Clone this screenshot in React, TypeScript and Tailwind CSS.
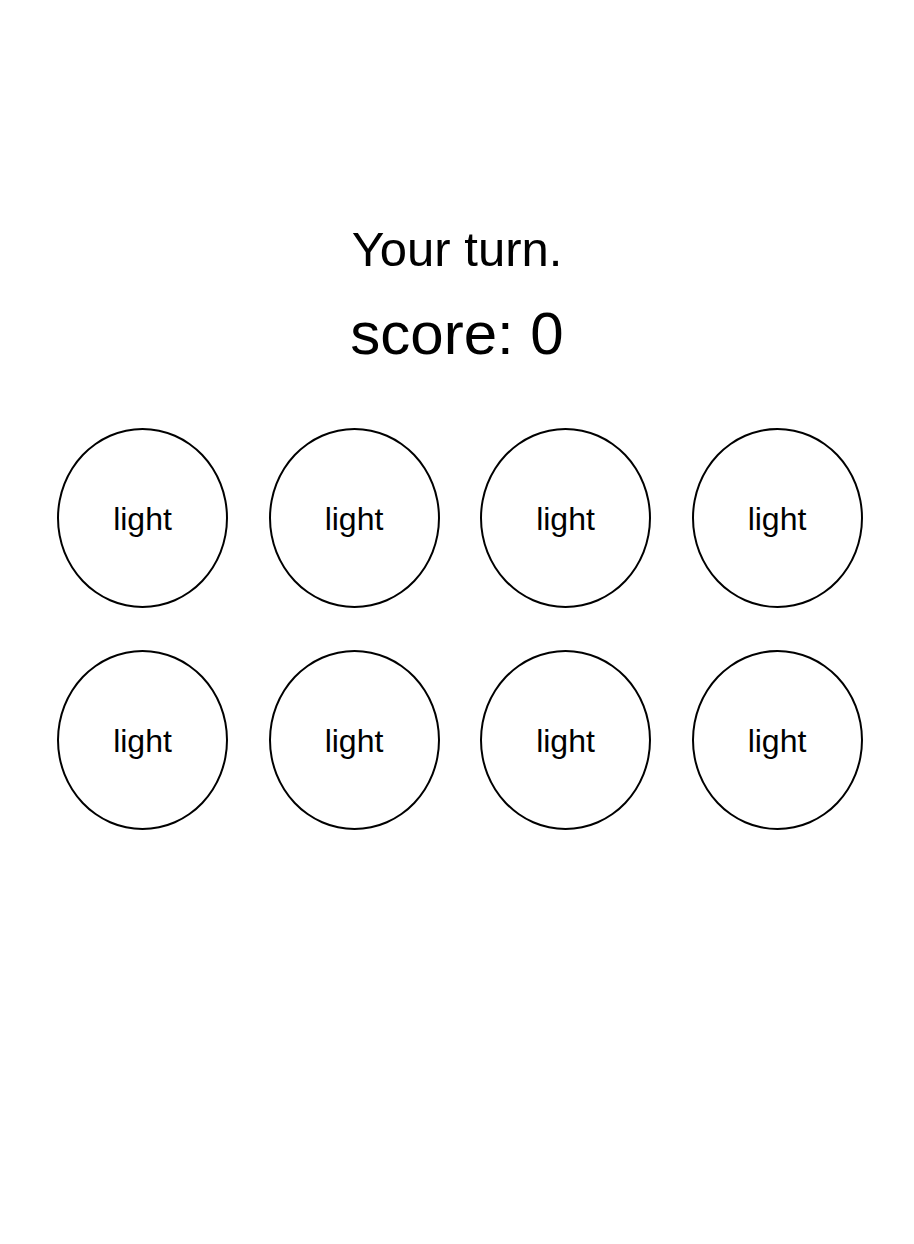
import React from 'react';

const lights = Array.from({ length: 8 });

const App = () => {
  return (
    <div className="min-h-screen bg-white text-black" style={{ fontFamily: '"Liberation Sans", Arial, sans-serif' }}>
      <div className="pt-[221px] flex flex-col items-center">
        <h1 className="text-[49px] leading-[57px]">Your turn.</h1>
        <h2 className="mt-[22px] text-[60px] leading-[68px]">score: 0</h2>
      </div>
      <div className="mt-[60px] ml-[57px] grid grid-cols-[repeat(4,171px)] gap-x-[40.5px] gap-y-[42px]">
        {lights.map((_, i) => (
          <button
            key={i}
            className="w-[171px] h-[180px] rounded-[50%] border-2 border-black bg-white flex items-center justify-center text-[32px] leading-none pt-[2px]"
          >
            light
          </button>
        ))}
      </div>
    </div>
  );
};

export default App;
